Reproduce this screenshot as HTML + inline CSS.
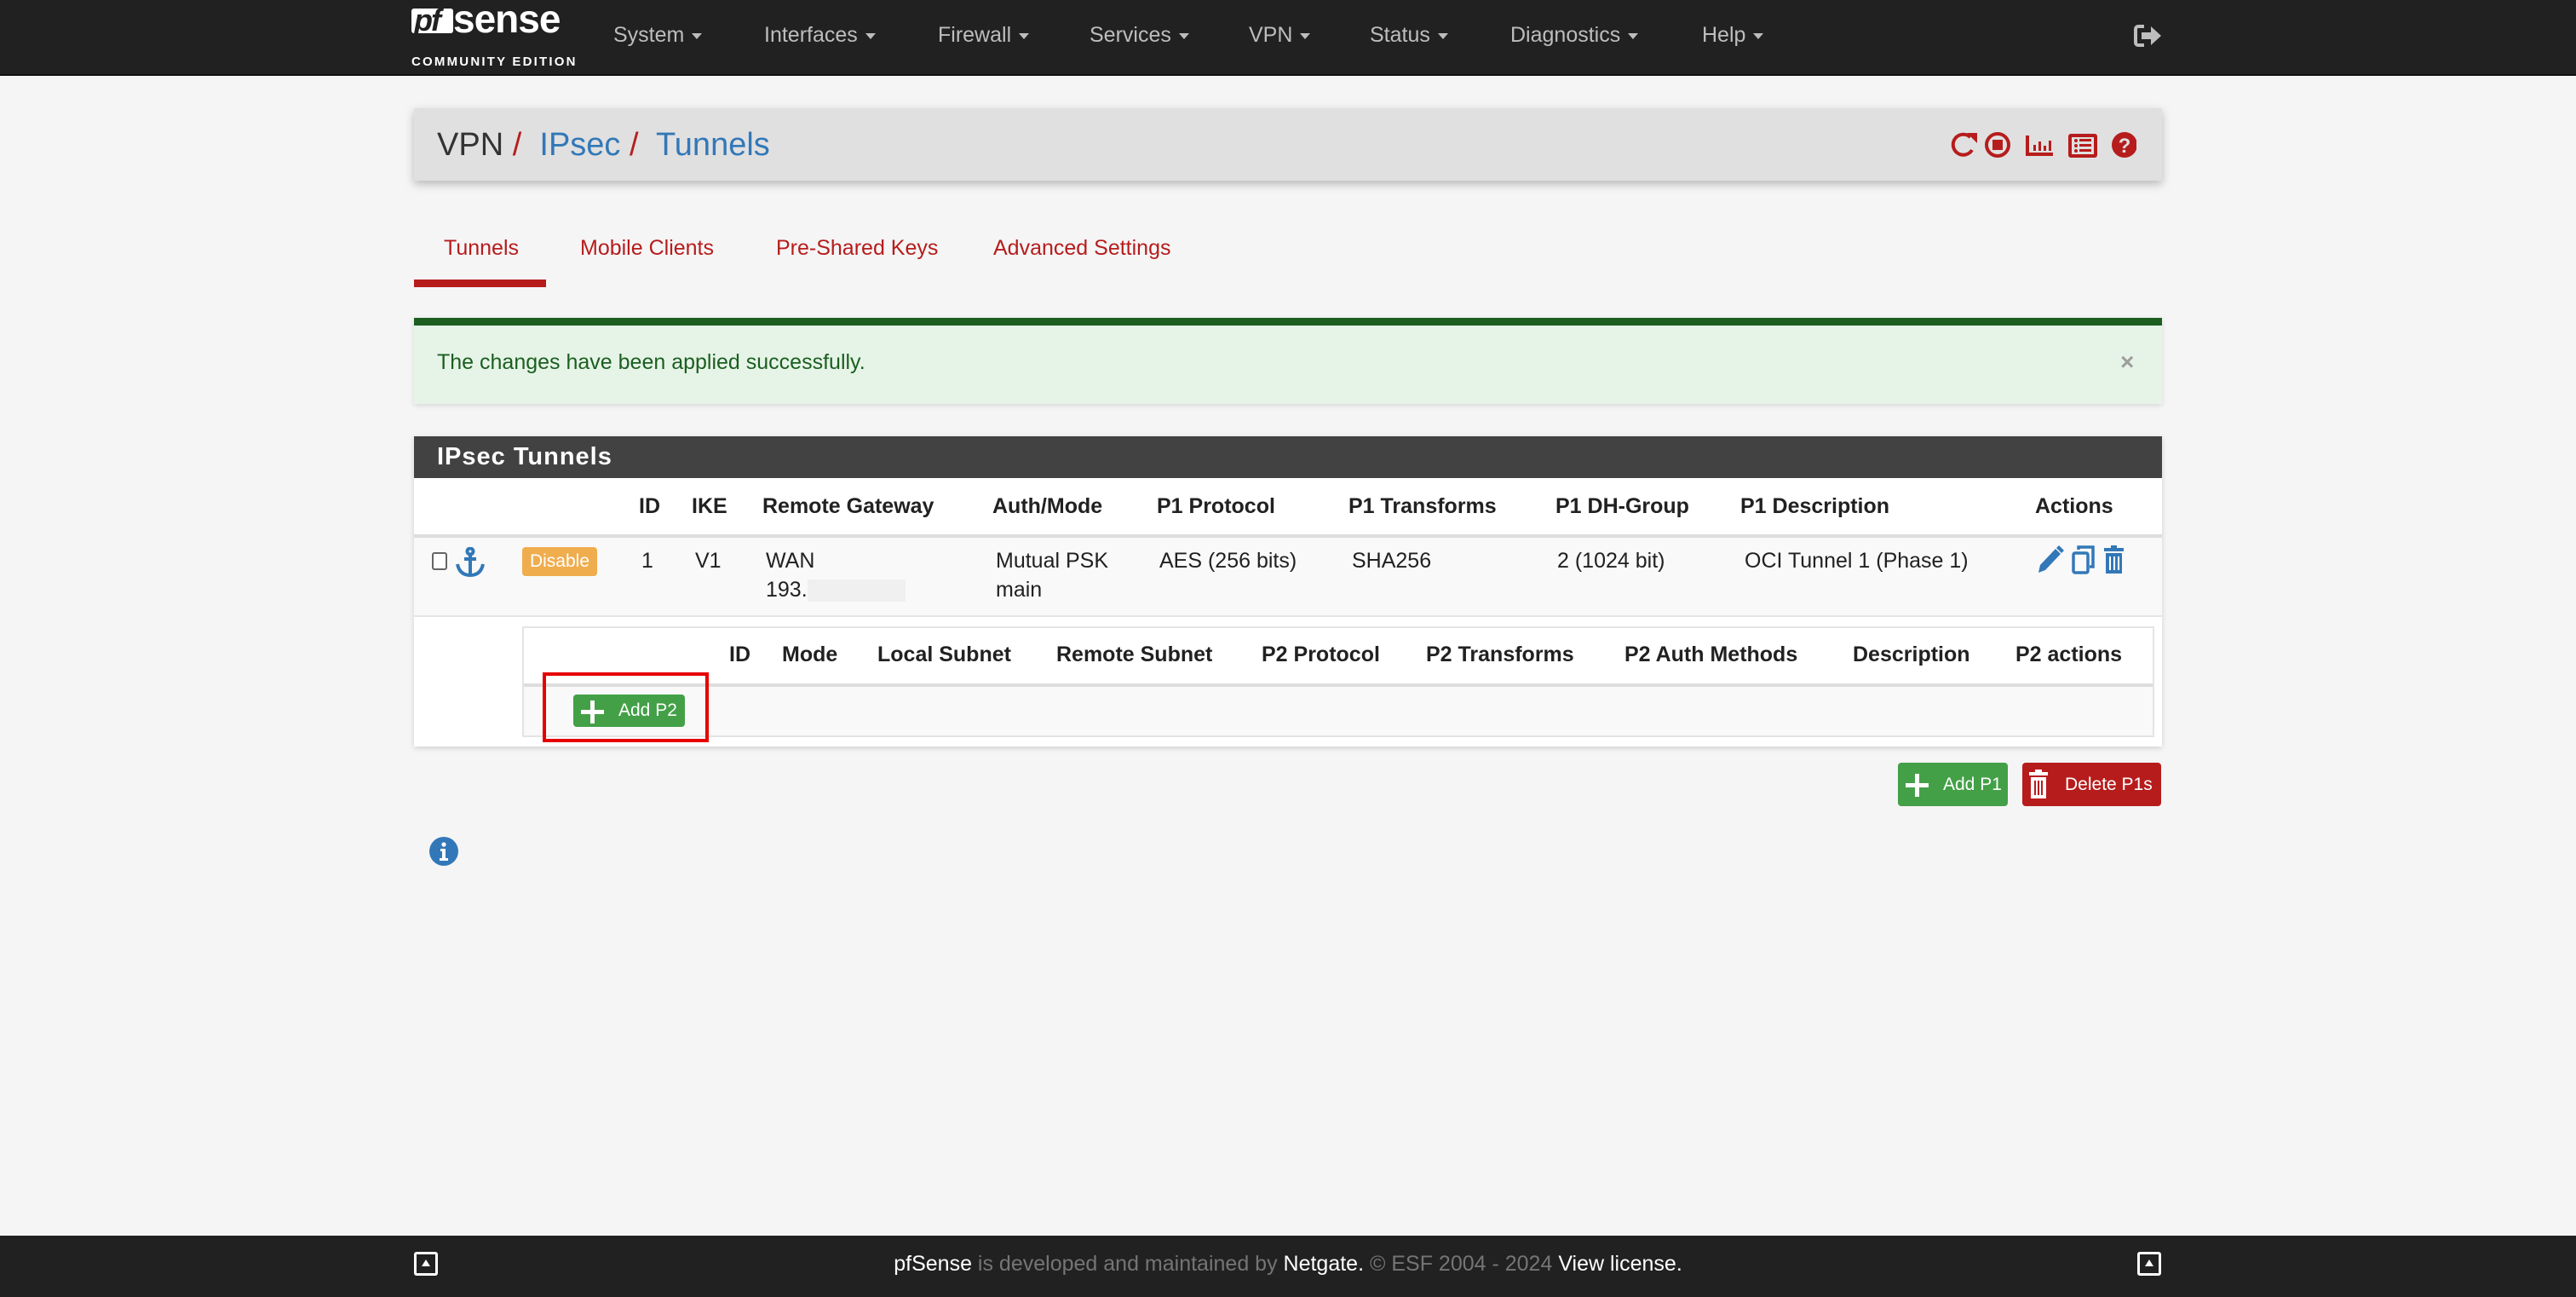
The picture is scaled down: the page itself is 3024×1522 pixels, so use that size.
<!DOCTYPE html>
<html><head><meta charset="utf-8">
<style>
*{margin:0;padding:0;box-sizing:border-box}
body{width:3024px;height:1522px;background:#f5f5f5;font-family:"Liberation Sans",sans-serif;font-size:25px;color:#212121;position:relative;overflow:hidden}
.a{position:absolute;white-space:nowrap}
.t{position:absolute;white-space:nowrap;line-height:30px}
.nav{position:absolute;left:0;top:0;width:3024px;height:89px;background:#212121;border-bottom:2px solid #111}
.nv{color:#bdbdbd;font-size:25px}
.car{display:inline-block;width:0;height:0;border-left:6px solid transparent;border-right:6px solid transparent;border-top:7px solid #bdbdbd;vertical-align:middle;margin-left:9px}
.b{font-weight:bold}
.red{color:#b71c1c}
.blue{color:#3278b8}
</style></head><body>
<div class="nav">
  <div class="a" style="left:483px;top:10px;width:49px;height:29px;background:#fff;border-radius:3px"></div>
  <div class="a" style="left:486px;top:4px;font-size:36px;font-weight:bold;font-style:italic;color:#212121;line-height:40px;letter-spacing:-2px">pf</div>
  <div class="a" style="left:532px;top:0px;font-size:46px;font-weight:bold;color:#fff;line-height:44px;letter-spacing:-1px">sense</div>
  <div class="a" style="left:483px;top:64px;font-size:15px;font-weight:bold;color:#fff;letter-spacing:2.2px;line-height:18px">COMMUNITY EDITION</div>
  <div class="t nv" style="left:720px;top:26px">System<span class="car"></span></div>
  <div class="t nv" style="left:897px;top:26px">Interfaces<span class="car"></span></div>
  <div class="t nv" style="left:1101px;top:26px">Firewall<span class="car"></span></div>
  <div class="t nv" style="left:1279px;top:26px">Services<span class="car"></span></div>
  <div class="t nv" style="left:1466px;top:26px">VPN<span class="car"></span></div>
  <div class="t nv" style="left:1608px;top:26px">Status<span class="car"></span></div>
  <div class="t nv" style="left:1773px;top:26px">Diagnostics<span class="car"></span></div>
  <div class="t nv" style="left:1998px;top:26px">Help<span class="car"></span></div>
  <svg class="a" style="left:2505px;top:28px" width="34" height="28" viewBox="0 0 34 28"><path d="M12 3H5a3 3 0 0 0-3 3v16a3 3 0 0 0 3 3h7" fill="none" stroke="#bdbdbd" stroke-width="4"/><path d="M9 10h11V3l12 11-12 11v-7H9z" fill="#bdbdbd"/></svg>
</div>

<!-- breadcrumb -->
<div class="a" style="left:486px;top:127px;width:2052px;height:85px;background:#e0e0e0;box-shadow:0 4px 10px rgba(0,0,0,.25)"></div>
<div class="a" style="left:513px;top:147px;font-size:38px;line-height:46px;color:#333">VPN <span class="red">/</span>&nbsp; <span class="blue">IPsec</span> <span class="red">/</span>&nbsp; <span class="blue">Tunnels</span></div>
<svg class="a" style="left:2288px;top:152px" width="220" height="36" viewBox="0 0 220 36">
 <g fill="none" stroke="#b71c1c" stroke-width="4">
  <path d="M25 9A12 12 0 1 0 27 24"/>
  <circle cx="57" cy="18" r="13"/>
  <path d="M92 7v22h30"/>
  <rect x="142" y="7" width="30" height="24" rx="1"/>
 </g>
 <path d="M21 4h12v12z" fill="#b71c1c"/>
 <rect x="51" y="12" width="12" height="12" fill="#b71c1c"/>
 <g fill="#b71c1c"><rect x="99" y="18" width="3" height="7"/><rect x="105" y="14" width="3" height="11"/><rect x="111" y="19" width="3" height="6"/><rect x="117" y="13" width="3" height="12"/>
 <circle cx="149" cy="13" r="2"/><circle cx="149" cy="19" r="2"/><circle cx="149" cy="25" r="2"/><rect x="153" y="11" width="14" height="3"/><rect x="153" y="17" width="14" height="3"/><rect x="153" y="23" width="14" height="3"/>
 <circle cx="206" cy="18" r="15"/></g>
 <text x="206" y="27" font-family="Liberation Sans" font-weight="bold" font-size="24" fill="#e0e0e0" text-anchor="middle">?</text>
</svg>

<!-- tabs -->
<div class="t red" style="left:521px;top:276px">Tunnels</div>
<div class="t red" style="left:681px;top:276px">Mobile Clients</div>
<div class="t red" style="left:911px;top:276px">Pre-Shared Keys</div>
<div class="t red" style="left:1166px;top:276px">Advanced Settings</div>
<div class="a" style="left:486px;top:328px;width:155px;height:9px;background:#b71c1c"></div>

<!-- alert -->
<div class="a" style="left:486px;top:373px;width:2052px;height:101px;background:#e6f4e7;border-top:9px solid #1b5e20;box-shadow:0 2px 6px rgba(0,0,0,.12)"></div>
<div class="t" style="left:513px;top:410px;color:#1b5e20">The changes have been applied successfully.</div>
<div class="t b" style="left:2489px;top:410px;color:#9e9e9e;font-size:28px">×</div>

<!-- panel -->
<div class="a" style="left:486px;top:512px;width:2052px;height:364px;background:#fff;box-shadow:0 2px 6px rgba(0,0,0,.15)"></div>
<div class="a" style="left:486px;top:512px;width:2052px;height:49px;background:#424242"></div>
<div class="t b" style="left:513px;top:521px;color:#fff;font-size:29px;letter-spacing:1px">IPsec Tunnels</div>
<div class="t b" style="left:750px;top:579px">ID</div>
<div class="t b" style="left:812px;top:579px">IKE</div>
<div class="t b" style="left:895px;top:579px">Remote Gateway</div>
<div class="t b" style="left:1165px;top:579px">Auth/Mode</div>
<div class="t b" style="left:1358px;top:579px">P1 Protocol</div>
<div class="t b" style="left:1583px;top:579px">P1 Transforms</div>
<div class="t b" style="left:1826px;top:579px">P1 DH-Group</div>
<div class="t b" style="left:2043px;top:579px">P1 Description</div>
<div class="t b" style="left:2389px;top:579px">Actions</div>
<div class="a" style="left:486px;top:627px;width:2052px;height:4px;background:#ddd"></div>
<div class="a" style="left:486px;top:631px;width:2052px;height:93px;background:#f9f9f9;border-bottom:2px solid #e4e4e4"></div>
<div class="a" style="left:507px;top:648px;width:18px;height:21px;border:2px solid #666;border-radius:3px;background:#fff"></div>
<svg class="a" style="left:533px;top:642px" width="38" height="36" viewBox="0 0 38 36"><g fill="none" stroke="#3278b8" stroke-width="4"><circle cx="19" cy="5" r="3.5"/><path d="M19 9v24M12 14h14M4 20c2 10 8 13 15 13s13-3 15-13"/></g></svg>
<div class="a" style="left:613px;top:642px;width:88px;height:34px;background:#f0ad4e;border-radius:4px;color:#fff;font-size:21px;line-height:34px;text-align:center">Disable</div>
<div class="t" style="left:753px;top:643px">1</div>
<div class="t" style="left:816px;top:643px">V1</div>
<div class="t" style="left:899px;top:643px">WAN</div>
<div class="t" style="left:899px;top:677px">193.<span style="display:inline-block;width:115px;height:26px;background:#f0f0f0;vertical-align:middle"></span></div>
<div class="t" style="left:1169px;top:643px">Mutual PSK</div>
<div class="t" style="left:1169px;top:677px">main</div>
<div class="t" style="left:1361px;top:643px">AES (256 bits)</div>
<div class="t" style="left:1587px;top:643px">SHA256</div>
<div class="t" style="left:1828px;top:643px">2 (1024 bit)</div>
<div class="t" style="left:2048px;top:643px">OCI Tunnel 1 (Phase 1)</div>
<svg class="a" style="left:2390px;top:640px" width="115" height="34" viewBox="0 0 115 34">
 <path d="M3 32l2-9 18-19 6 6-18 19z M24 3l3-3 6 6-3 3z" fill="#3278b8"/>
 <g fill="none" stroke="#3278b8" stroke-width="3.5"><rect x="44" y="9" width="17" height="23" rx="2"/><path d="M50 5V2h17v23h-4"/></g>
 <rect x="80" y="3" width="23" height="4" fill="#3278b8"/><rect x="88" y="0" width="7" height="4" fill="#3278b8"/>
 <path d="M82 9h19v24H82z" fill="#3278b8"/><g fill="#fff"><rect x="86" y="13" width="2" height="16"/><rect x="91" y="13" width="2" height="16"/><rect x="96" y="13" width="2" height="16"/></g>
</svg>

<!-- inner P2 table -->
<div class="a" style="left:613px;top:735px;width:1916px;height:130px;border:2px solid #e4e4e4;background:#fff"></div>
<div class="a" style="left:615px;top:802px;width:1912px;height:61px;background:#f9f9f9;border-top:4px solid #ddd"></div>
<div class="t b" style="left:856px;top:753px">ID</div>
<div class="t b" style="left:918px;top:753px">Mode</div>
<div class="t b" style="left:1030px;top:753px">Local Subnet</div>
<div class="t b" style="left:1240px;top:753px">Remote Subnet</div>
<div class="t b" style="left:1481px;top:753px">P2 Protocol</div>
<div class="t b" style="left:1674px;top:753px">P2 Transforms</div>
<div class="t b" style="left:1907px;top:753px">P2 Auth Methods</div>
<div class="t b" style="left:2175px;top:753px">Description</div>
<div class="t b" style="left:2366px;top:753px">P2 actions</div>
<div class="a" style="left:673px;top:815px;width:131px;height:38px;background:#43a047;border-radius:4px"></div>
<svg class="a" style="left:681px;top:820px" width="30" height="30" viewBox="0 0 30 30"><path d="M12 2h5v11h11v5H17v11h-5V18H1v-5h11z" fill="#fff"/></svg>
<div class="a" style="left:726px;top:819px;color:#fff;font-size:21px;line-height:30px">Add P2</div>
<div class="a" style="left:637px;top:789px;width:195px;height:82px;border:4px solid #e60000"></div>

<!-- buttons -->
<div class="a" style="left:2228px;top:895px;width:129px;height:51px;background:#43a047;border-radius:4px"></div>
<svg class="a" style="left:2236px;top:906px" width="30" height="30" viewBox="0 0 30 30"><path d="M12 2h5v11h11v5H17v11h-5V18H1v-5h11z" fill="#fff"/></svg>
<div class="a" style="left:2281px;top:906px;color:#fff;font-size:21px;line-height:30px">Add P1</div>
<div class="a" style="left:2374px;top:895px;width:163px;height:51px;background:#b71c1c;border-radius:4px"></div>
<svg class="a" style="left:2382px;top:903px" width="22" height="34" viewBox="0 0 22 34"><rect x="0" y="3" width="22" height="4" fill="#fff"/><rect x="7" y="0" width="8" height="4" fill="#fff"/><path d="M2 9h18v25H2z" fill="#fff"/><g fill="#b71c1c"><rect x="6" y="13" width="2" height="17"/><rect x="10" y="13" width="2" height="17"/><rect x="14" y="13" width="2" height="17"/></g></svg>
<div class="a" style="left:2424px;top:906px;color:#fff;font-size:21px;line-height:30px">Delete P1s</div>

<!-- info -->
<svg class="a" style="left:504px;top:982px" width="34" height="34" viewBox="0 0 34 34"><circle cx="17" cy="17" r="17" fill="#3278b8"/><circle cx="17" cy="9" r="2.6" fill="#fff"/><path d="M13 14h6v11h3v3H12v-3h3v-8h-2z" fill="#fff"/></svg>

<!-- footer -->
<div class="a" style="left:0;top:1450px;width:3024px;height:72px;background:#212121"></div>
<div class="a" style="left:0;top:1468px;width:3024px;text-align:center;font-size:25px;line-height:30px;color:#757575">
<span style="color:#fff">pfSense</span> is developed and maintained by <span style="color:#fff">Netgate.</span> © ESF 2004 - 2024 <span style="color:#fff">View license.</span></div>
<div class="a" style="left:486px;top:1469px;width:28px;height:28px;border:3px solid #fff;border-radius:3px"></div>
<div class="a" style="left:495px;top:1478px;width:0;height:0;border-left:5px solid transparent;border-right:5px solid transparent;border-bottom:8px solid #fff"></div>
<div class="a" style="left:2509px;top:1469px;width:28px;height:28px;border:3px solid #fff;border-radius:3px"></div>
<div class="a" style="left:2518px;top:1478px;width:0;height:0;border-left:5px solid transparent;border-right:5px solid transparent;border-bottom:8px solid #fff"></div>
</body></html>
